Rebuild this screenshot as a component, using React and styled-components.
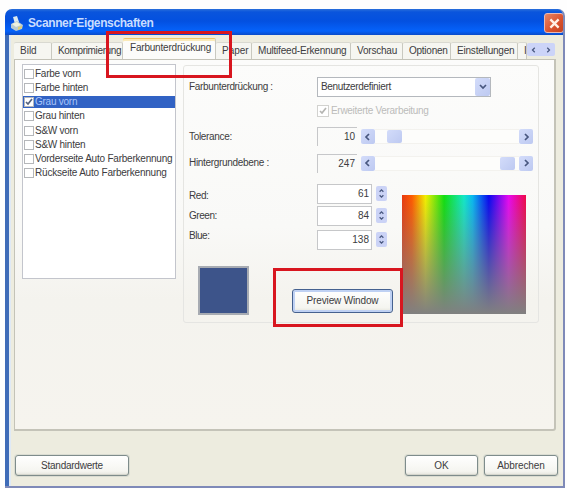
import React from 'react';
import styled, { createGlobalStyle } from 'styled-components';

const GlobalStyle = createGlobalStyle`
  * {
    box-sizing: border-box;
  }

  body {
    margin: 0;
    overflow: hidden;
    background: #fefefe;
    color: #3c3c40;
    font: 10px/12px 'Liberation Sans', Arial, sans-serif;
  }
`;

const Screen = styled.div`
  position: relative;
  width: 567px;
  height: 489px;
  padding: 9px 2px 1px 5px;
`;

const Window = styled.div`
  display: flex;
  flex-direction: column;
  height: 479px;
  overflow: hidden;
  border: solid #7f8ab8;
  border-width: 0 2px 2px 0;
  border-radius: 7px 7px 0 0;
  background: #edecdf;
`;

const TitleBar = styled.div`
  display: flex;
  flex: 0 0 26px;
  align-items: center;
  padding: 2px 0 0 6px;
  background: linear-gradient(
    #2a6fdb 0,
    #0a55dc 3px,
    #0350e0 12px,
    #0562fa 22px,
    #0a4bc8 26px
  );
`;

const Title = styled.h1`
  flex: 1;
  margin: 0 0 0 5px;
  color: #c9ddff;
  font-size: 12px;
  line-height: 14px;
  letter-spacing: -0.38px;
`;

const CloseButton = styled.button`
  display: flex;
  align-items: center;
  justify-content: center;
  width: 20px;
  height: 20px;
  margin-right: -1px;
  padding: 0;
  border: 1px solid #e9b9b4;
  border-radius: 3px;
  background: linear-gradient(135deg, #e98667, #d9512d 60%, #c4421f);
`;

const Body = styled.div`
  display: flex;
  flex: 1;
  flex-direction: column;
  padding: 3px 7px 0 5px;
  border-left: 4px solid #3f6cb8;
  box-shadow: inset 2px 0 #dfe9f5;
`;

const TabBar = styled.div`
  display: flex;
  align-items: flex-end;
  height: 21px;
`;

const Tab = styled.div`
  width: ${props => props.width}px;
  height: ${props => (props.active ? 21 : 17)}px;
  padding: ${props => (props.active ? '3px 0 0 7px' : '2px 0 0 6px')};
  overflow: hidden;
  border: solid #c9c9c0;
  border-width: 1px 1px 0 0;
  border-top-color: ${props => (props.active ? '#edc46c' : '#d9d9d1')};
  border-radius: 2px 2px 0 0;
  background: ${props => (props.active ? '#fcfcfa' : '#f6f6f1')};
  box-shadow: ${props => (props.active ? 'inset 0 2px #faeab9' : 'none')};
  letter-spacing: ${props => props.spacing || 0}px;
  white-space: nowrap;
`;

const TabScroll = styled.div`
  display: flex;
  align-items: center;
  justify-content: space-around;
  width: 28px;
  height: 13px;
  margin-bottom: 3px;
  border-radius: 2px;
  background: #ccd4f8;
`;

const Panel = styled.div`
  display: flex;
  align-items: flex-start;
  height: 372px;
  padding: 4px 0 0 7px;
  border: solid #c4c3b8;
  border-width: 1px 2px 2px 1px;
  border-radius: 0 0 3px 0;
  background: linear-gradient(#fcfcfb, #f9f9f7 45%, #f4f3ee 65%, #f6f4ee);
`;

const List = styled.div`
  width: 154px;
  height: 215px;
  margin-right: 7px;
  padding-top: 2px;
  border: 1px solid #c3c5cc;
  background: #fff;
`;

const ListItem = styled.div`
  display: flex;
  align-items: center;
  height: 14.15px;
  padding-left: 1px;
  background: ${props =>
    props.selected
      ? 'linear-gradient(transparent 1px, #3162c4 1px, #3162c4 13px, transparent 13px)'
      : 'none'};
  color: ${props => (props.selected ? '#a9c5fa' : '#3c3c40')};
  letter-spacing: ${props => props.spacing || -0.25}px;
  white-space: nowrap;
`;

const Box = styled.span`
  display: flex;
  align-items: center;
  justify-content: center;
  flex: none;
  width: ${props => props.size}px;
  height: ${props => props.size}px;
  margin-right: ${props => props.gap}px;
  border: 1px solid ${props => props.edge || '#b5b7ba'};
  background: #fff;
`;

const Group = styled.div`
  width: 356px;
  height: 258px;
  margin-top: 1px;
  padding: 10px 0 0 5px;
  border: 1px solid #e5e5e2;
  border-radius: 3px;
`;

const Row = styled.div`
  display: flex;
  align-items: center;
  height: ${props => props.height}px;
`;

const Label = styled.span`
  width: 128px;
  letter-spacing: ${props => props.spacing || 0}px;
  white-space: nowrap;
`;

const Select = styled.div`
  display: flex;
  align-items: center;
  justify-content: space-between;
  width: 174px;
  height: 20px;
  padding-left: 3px;
  border: 1px solid #b4b8bd;
  background: #fff;
  letter-spacing: -0.34px;
`;

const BlueButton = styled.span`
  display: flex;
  align-items: center;
  justify-content: center;
  flex: none;
  width: ${props => props.width || 14}px;
  height: ${props => props.height || 15}px;
  border-radius: 2px;
  background: linear-gradient(135deg, #d3dcfa, #bdc9f1);
`;

const Disabled = styled.span`
  color: #bcbcba;
  letter-spacing: -0.3px;
`;

const Value = styled.span`
  display: flex;
  align-items: center;
  justify-content: flex-end;
  width: ${props => props.width}px;
  height: ${props => props.height || 19}px;
  margin-right: 4px;
  padding-right: 2px;
  border: solid #c6c7c9;
  border-width: ${props => (props.flat ? '1px 0 0 1px' : '1px')};
  background: ${props => (props.flat ? 'transparent' : '#fff')};
`;

const Track = styled.div`
  display: flex;
  width: 144px;
  height: 15px;
  padding-left: ${props => props.start}px;
  border: solid #f3f2ee;
  border-width: 1px 0;
  background: #fdfdfb;
`;

const Lower = styled.div`
  display: flex;
  padding-top: 5px;
`;

const Rgb = styled.div`
  display: grid;
  grid-template-columns: 128px 85px;
  grid-template-rows: 83px 48px;
`;

const RgbLabels = styled.div`
  padding-top: 3px;
`;

const Spinner = styled.span`
  display: flex;
  flex-direction: column;
  align-items: center;
  justify-content: space-between;
  width: 11px;
  height: 15px;
  padding: 2px 0;
  border-radius: 2px;
  background: #cbd3f6;
`;

const Swatch = styled.div`
  width: 51px;
  height: 49px;
  margin-left: 9px;
  border: 2px solid #a7abb2;
  background: #3d548a;
`;

const Spectrum = styled.div`
  width: 124px;
  height: 119px;
  margin-top: 12px;
  background:
    linear-gradient(rgba(128, 128, 128, 0), #808080),
    linear-gradient(
      90deg,
      #e83a10,
      #ff5a00 8%,
      #f2f000 19%,
      #10e010 34%,
      #12e8c8 50%,
      #08b8f0 57%,
      #0808f0 70%,
      #e808f0 86%,
      #f00848 100%
    );
`;

const Button = styled.button`
  width: ${props => props.width}px;
  height: ${props => props.height || 21}px;
  padding: 0;
  border: 1px solid ${props => (props.focused ? '#45618f' : '#7e8c8b')};
  border-radius: 3px;
  background: linear-gradient(#fff, #f5f5f0 80%, #e5e4dc);
  box-shadow: ${props =>
    props.focused
      ? 'inset 0 0 0 2px #bfd1f3'
      : 'inset 0 -1px #d5d6cd, 0 0 0 1px #dadcd2'};
  color: #3c3c40;
  font: inherit;
  letter-spacing: ${props => props.spacing || 0}px;
`;

const PreviewSlot = styled.div`
  margin: 23px 0 0 -25px;
`;

const Footer = styled.div`
  display: flex;
  gap: 6px;
  margin-right: -2px;
  padding: 24px 0 0 1px;

  button:first-child {
    margin-right: auto;
  }
`;

const Highlight = styled.div`
  position: absolute;
  top: ${props => props.top}px;
  left: ${props => props.left}px;
  width: ${props => props.width}px;
  height: ${props => props.height}px;
  border: 3px solid #d8161f;
  pointer-events: none;
`;

const paths = {
  left: 'M5 1L2 4l3 3',
  right: 'M3 1l3 3-3 3',
  up: 'M1 6l3-3 3 3',
  down: 'M1 2l3 3 3-3',
  check: 'M1 4l2 2 4-5',
  close: 'M1 1l6 6M7 1L1 7'
};

const Glyph = ({ name, size = 8, color = '#48577f', stroke = 1.7 }) => (
  <svg width={size} height={size} viewBox="0 0 8 8">
    <path d={paths[name]} fill="none" stroke={color} strokeWidth={stroke} />
  </svg>
);

const ScannerIcon = () => (
  <svg width="12" height="15" viewBox="0 0 12 15">
    <path d="M2 1l4-1 2 6-4 2z" fill="#dce9ef" />
    <path d="M0 8l6-3 6 4-1 4-6 2-5-3z" fill="#b9cbd2" />
    <path d="M1 8l5-2 4 3-5 2z" fill="#eef1df" />
    <path d="M7 11l4-1v2l-4 2z" fill="#e0cf72" />
  </svg>
);

const tabs = [
  { name: 'Bild', width: 38 },
  { name: 'Komprimierung', width: 71, spacing: -0.35 },
  { name: 'Farbunterdrückung', width: 93, spacing: -0.2, active: true },
  { name: 'Paper', width: 36 },
  { name: 'Multifeed-Erkennung', width: 99, spacing: -0.2 },
  { name: 'Vorschau', width: 52, spacing: -0.2 },
  { name: 'Optionen', width: 48, spacing: -0.25 },
  { name: 'Einstellungen', width: 67, spacing: -0.2 },
  { name: 'I', width: 9 }
];

const sides = [
  { name: 'Farbe vorn' },
  { name: 'Farbe hinten' },
  { name: 'Grau vorn', selected: true },
  { name: 'Grau hinten' },
  { name: 'S&W vorn' },
  { name: 'S&W hinten' },
  { name: 'Vorderseite Auto Farberkennung', spacing: -0.22 },
  { name: 'Rückseite Auto Farberkennung', spacing: -0.2 }
];

const channels = [
  { name: 'Red:', value: 61, height: 21 },
  { name: 'Green:', value: 84, height: 23 },
  { name: 'Blue:', value: 138, height: 25 }
];

const SliderRow = ({ label, value, start, height }) => (
  <Row height={height}>
    <Label spacing={-0.32}>{label}</Label>
    <Value flat width={40}>
      {value}
    </Value>
    <BlueButton>
      <Glyph name="left" />
    </BlueButton>
    <Track start={start}>
      <BlueButton width={15} height={13} />
    </Track>
    <BlueButton>
      <Glyph name="right" />
    </BlueButton>
  </Row>
);

const App = () => (
  <Screen>
    <GlobalStyle />
    <Window>
      <TitleBar>
        <ScannerIcon />
        <Title>Scanner-Eigenschaften</Title>
        <CloseButton aria-label="Schließen">
          <Glyph name="close" size={11} color="#fff0e5" />
        </CloseButton>
      </TitleBar>
      <Body>
        <TabBar>
          {tabs.map(({ name, ...rest }) => (
            <Tab key={name} {...rest}>
              {name}
            </Tab>
          ))}
          <TabScroll>
            <Glyph name="left" size={6} />
            <Glyph name="right" size={6} />
          </TabScroll>
        </TabBar>
        <Panel>
          <List>
            {sides.map(({ name, selected, spacing }) => (
              <ListItem key={name} selected={selected} spacing={spacing}>
                <Box size={10} gap={1}>
                  {selected && <Glyph name="check" color="#55627d" />}
                </Box>
                {name}
              </ListItem>
            ))}
          </List>
          <Group>
            <Row height={21}>
              <Label spacing={-0.33}>Farbunterdrückung :</Label>
              <Select>
                Benutzerdefiniert
                <BlueButton width={15} height={18}>
                  <Glyph name="down" />
                </BlueButton>
              </Select>
            </Row>
            <Row height={28}>
              <Label />
              <Box size={12} gap={2} edge="#d2d2cf">
                <Glyph name="check" color="#b5b5b2" />
              </Box>
              <Disabled>Erweiterte Verarbeitung</Disabled>
            </Row>
            <SliderRow label="Tolerance:" value={10} start={12} height={23} />
            <SliderRow
              label="Hintergrundebene :"
              value={247}
              start={125}
              height={30}
            />
            <Lower>
              <Rgb>
                <RgbLabels>
                  {channels.map(({ name }) => (
                    <Row key={name} height={20}>
                      <Label spacing={-0.45}>{name}</Label>
                    </Row>
                  ))}
                </RgbLabels>
                <div>
                  {channels.map(({ name, value, height }) => (
                    <Row key={name} height={height}>
                      <Value width={55} height={20}>
                        {value}
                      </Value>
                      <Spinner>
                        <Glyph name="up" size={5} stroke={2} />
                        <Glyph name="down" size={5} stroke={2} />
                      </Spinner>
                    </Row>
                  ))}
                </div>
                <Swatch />
                <PreviewSlot>
                  <Button focused width={101} height={24} spacing={-0.15}>
                    Preview Window
                  </Button>
                </PreviewSlot>
              </Rgb>
              <Spectrum />
            </Lower>
          </Group>
        </Panel>
        <Footer>
          <Button width={114} spacing={-0.25}>
            Standardwerte
          </Button>
          <Button width={73}>OK</Button>
          <Button width={74} spacing={-0.1}>
            Abbrechen
          </Button>
        </Footer>
      </Body>
    </Window>
    <Highlight top={31} left={106} width={126} height={47} />
    <Highlight top={268} left={273} width={130} height={59} />
  </Screen>
);

export default App;
